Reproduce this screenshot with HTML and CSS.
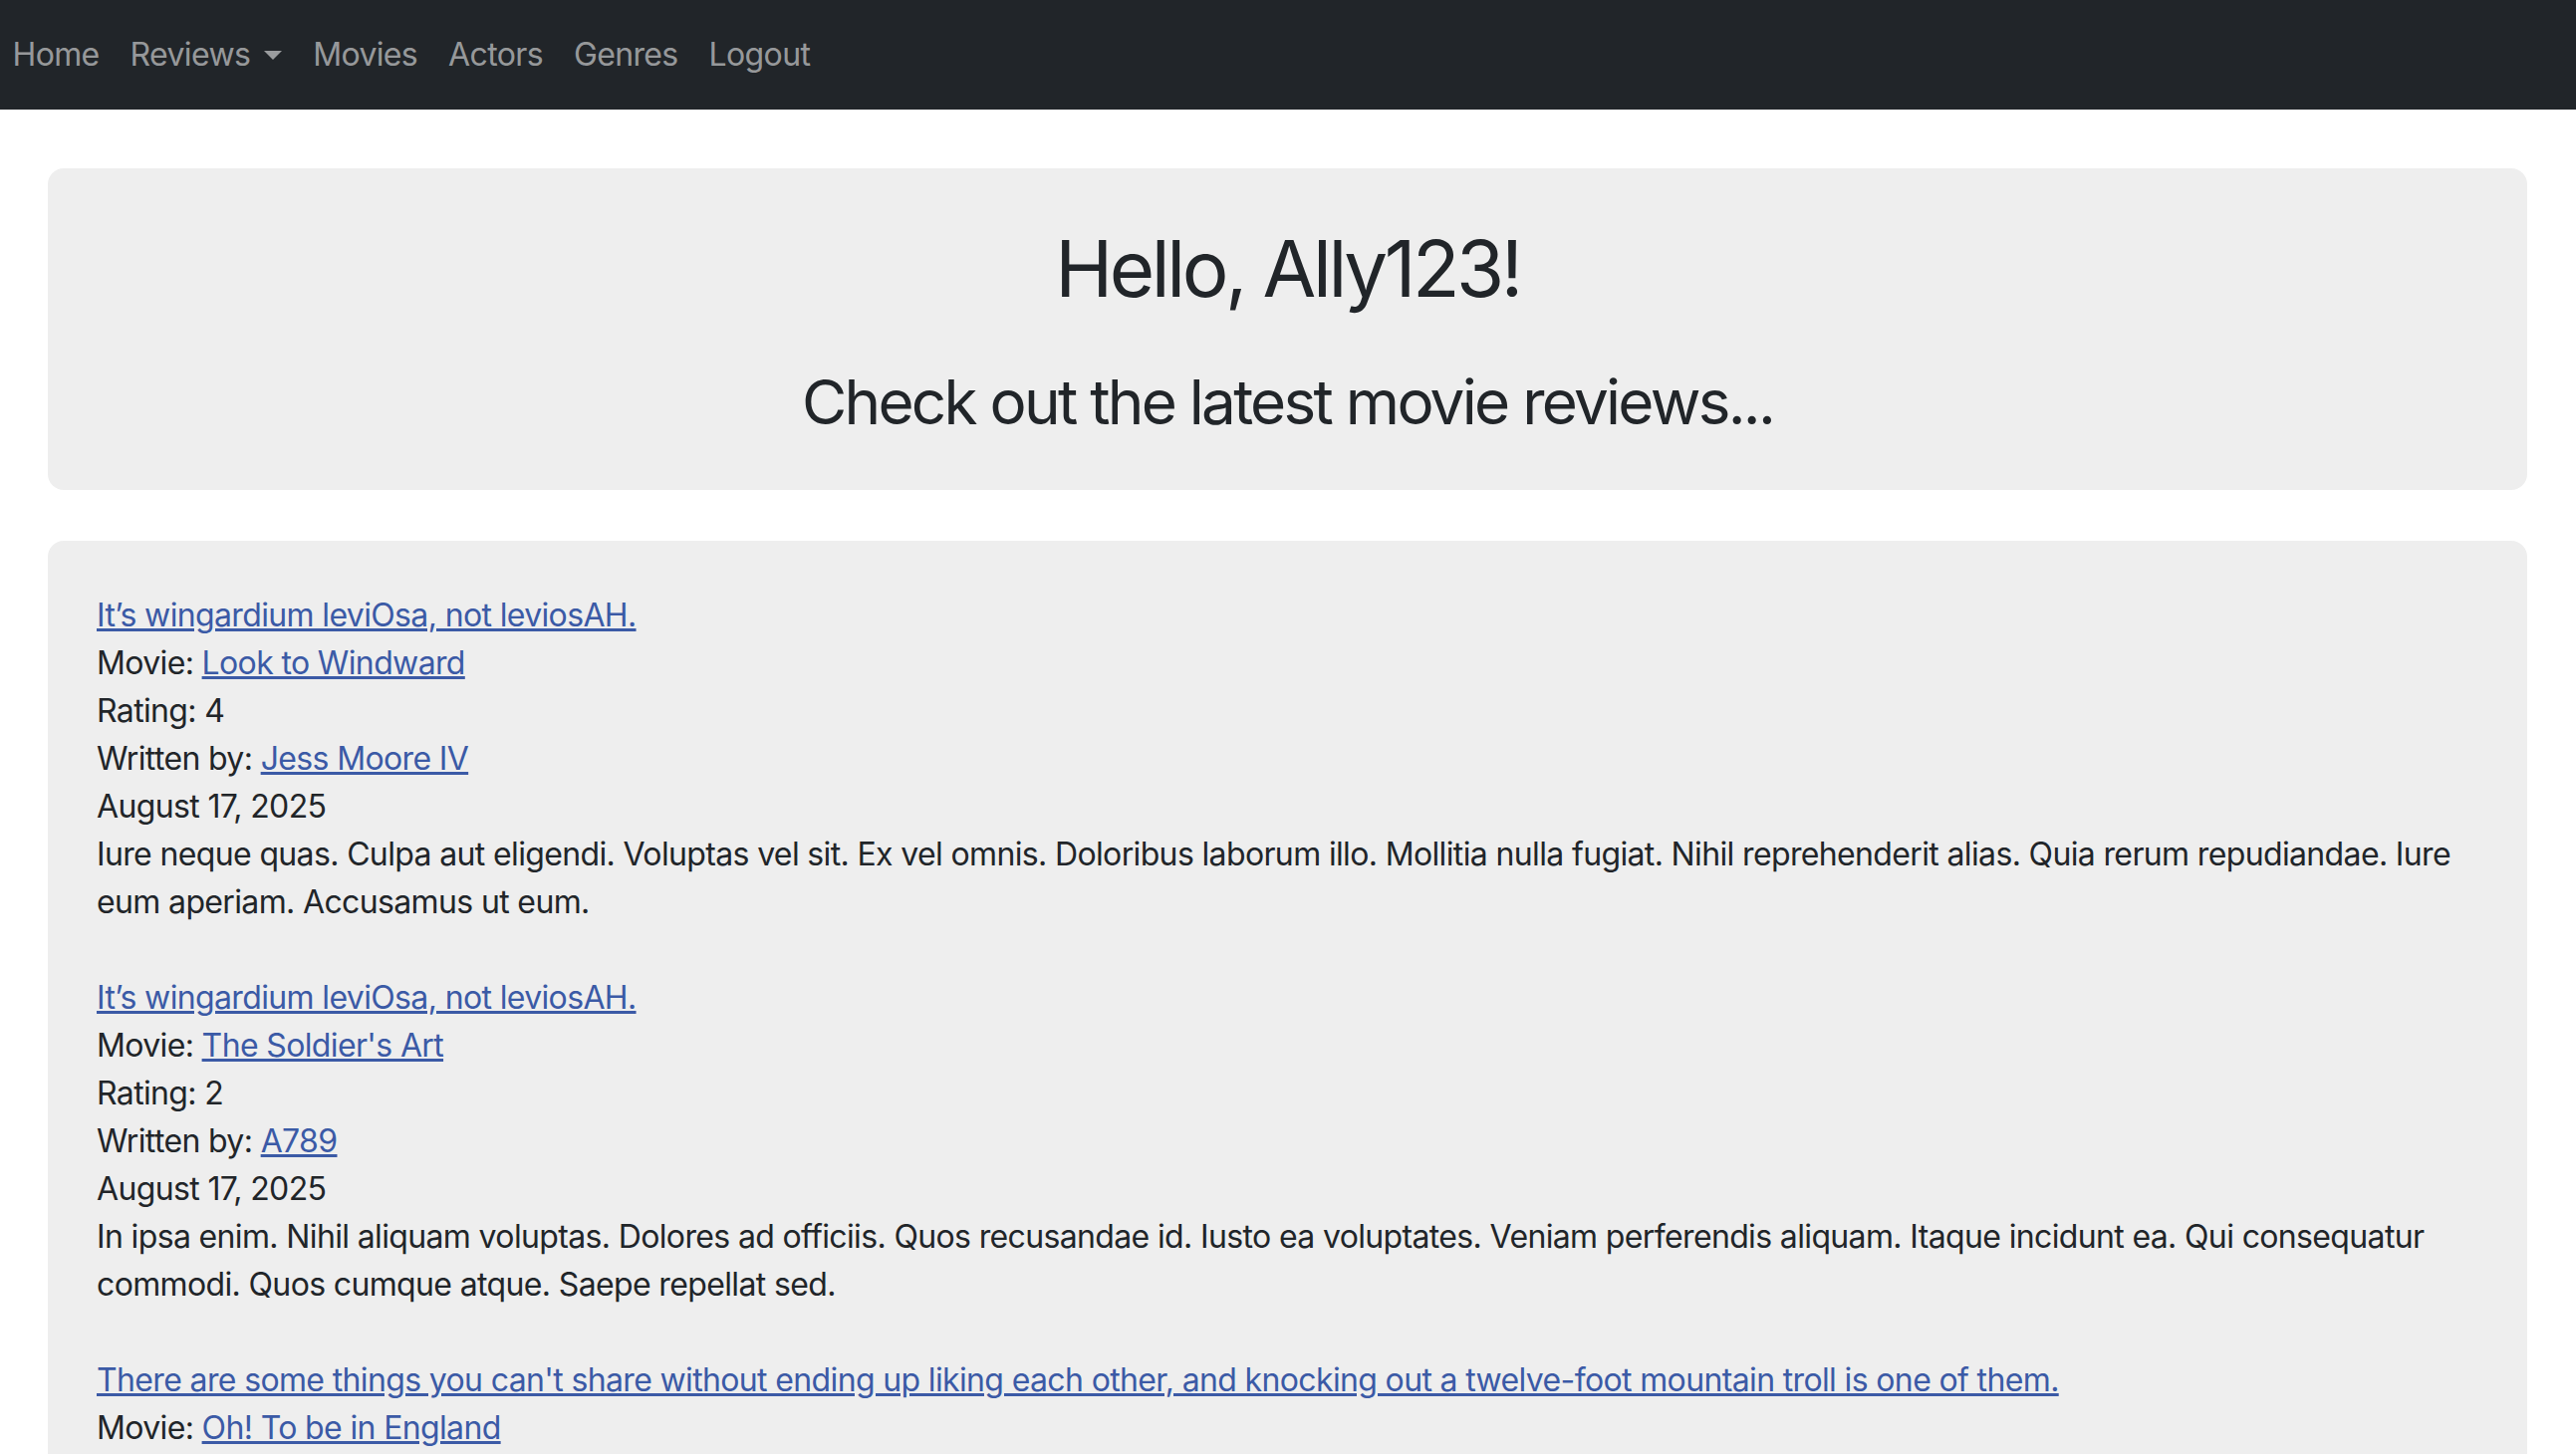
FILE: index.html
```html
<!DOCTYPE html>
<html lang="en">
<head>
<meta charset="utf-8">
<title>Movie Reviews</title>
<link rel="stylesheet" href="styles.css">
</head>
<body>
<nav class="navbar">
  <ul class="nav">
    <li><a class="nav-link" href="#">Home</a></li>
    <li><a class="nav-link dropdown-toggle" href="#">Reviews</a></li>
    <li><a class="nav-link" href="#">Movies</a></li>
    <li><a class="nav-link" href="#">Actors</a></li>
    <li><a class="nav-link" href="#">Genres</a></li>
    <li><a class="nav-link" href="#">Logout</a></li>
  </ul>
</nav>
<main class="page">
  <section class="hero">
    <h1 class="hero-title">Hello, Ally123!</h1>
    <h2 class="hero-sub">Check out the latest movie reviews...</h2>
  </section>
  <section class="reviews">
    <article class="review">
      <div><a href="#">It’s wingardium leviOsa, not leviosAH.</a></div>
      <div>Movie: <a href="#">Look to Windward</a></div>
      <div>Rating: 4</div>
      <div>Written by: <a href="#">Jess Moore IV</a></div>
      <div>August 17, 2025</div>
      <p class="review-body">Iure neque quas. Culpa aut eligendi. Voluptas vel sit. Ex vel omnis. Doloribus laborum illo. Mollitia nulla fugiat. Nihil reprehenderit alias. Quia rerum repudiandae. Iure eum aperiam. Accusamus ut eum.</p>
    </article>
    <article class="review">
      <div><a href="#">It’s wingardium leviOsa, not leviosAH.</a></div>
      <div>Movie: <a href="#">The Soldier's Art</a></div>
      <div>Rating: 2</div>
      <div>Written by: <a href="#">A789</a></div>
      <div>August 17, 2025</div>
      <p class="review-body">In ipsa enim. Nihil aliquam voluptas. Dolores ad officiis. Quos recusandae id. Iusto ea voluptates. Veniam perferendis aliquam. Itaque incidunt ea. Qui consequatur commodi. Quos cumque atque. Saepe repellat sed.</p>
    </article>
    <article class="review">
      <div><a href="#">There are some things you can't share without ending up liking each other, and knocking out a twelve-foot mountain troll is one of them.</a></div>
      <div>Movie: <a href="#">Oh! To be in England</a></div>
      <div>Rating: 5</div>
      <div>Written by: <a href="#">Ally123</a></div>
      <div>August 16, 2025</div>
      <p class="review-body">Voluptatem quia est. Dolor et rerum. Sint nihil quo. Aut et eius.</p>
    </article>
  </section>
</main>
</body>
</html>
```
FILE: styles.css
```css
* { box-sizing: border-box; }

body {
  margin: 0;
  font-family: Inter, "Noto Sans", sans-serif;
  font-size: 32px;
  line-height: 48px;
  color: #212529;
  background: #ffffff;
  letter-spacing: -0.02em;
}

.navbar {
  height: 110px;
  background: #212529;
  display: flex;
  align-items: center;
}

.nav {
  list-style: none;
  margin: 0 0 0 -3px;
  padding: 0;
  display: flex;
  align-items: center;
}

.nav-link {
  display: flex;
  align-items: center;
  padding: 0 15.5px;
  color: rgba(255, 255, 255, 0.55);
  text-decoration: none;
  line-height: 48px;
}

.dropdown-toggle::after {
  content: "";
  display: inline-block;
  margin-left: 14px;
  border-top: 9.6px solid;
  border-left: 9.6px solid transparent;
  border-right: 9.6px solid transparent;
  border-bottom: 0;
}

.page {
  padding: 59px 49px 0 48px;
}

.hero {
  background: #eeeeee;
  border-radius: 16px;
  padding: 51px 48px 48px;
  text-align: center;
  margin-bottom: 51px;
}

.hero-title {
  margin: 0 0 46px;
  font-size: 78px;
  line-height: 99.4px;
  font-weight: 400;
  letter-spacing: -0.044em;
}

.hero-sub {
  margin: 0;
  font-size: 62px;
  line-height: 78.7px;
  font-weight: 400;
  letter-spacing: -0.044em;
}

.reviews {
  background: #eeeeee;
  border-radius: 16px;
  padding: 51px 48px 48px 49px;
}

.review {
  margin-bottom: 48px;
}

.review a {
  color: #3b5aa6;
  text-decoration: underline;
}

.review-body {
  margin: 0;
}
```
